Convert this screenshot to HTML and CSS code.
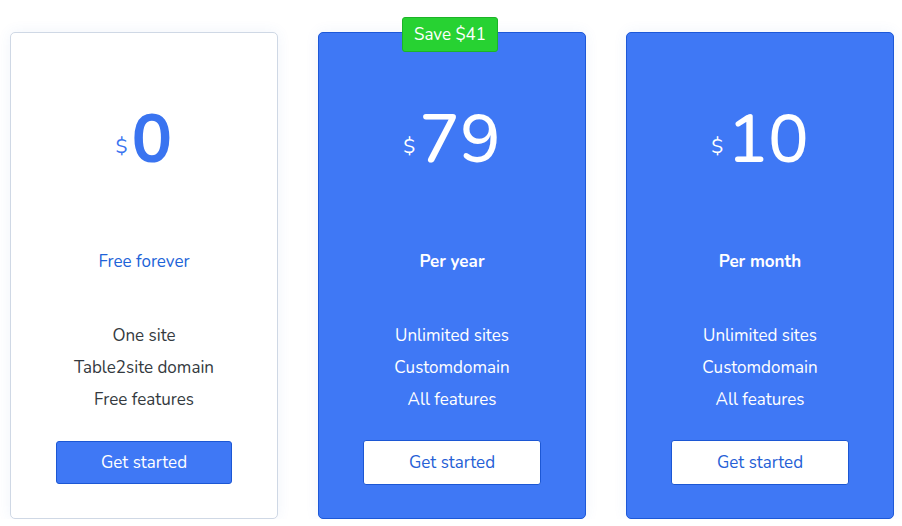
FILE: index.html
```html
<!DOCTYPE html>
<html>
<head>
<meta charset="utf-8">
<link rel="stylesheet" href="styles.css">
</head>
<body>
<div class="plans">
  <div class="card">
    <div class="price"><span class="cur">$</span><span class="amt amt-bold">0</span></div>
    <div class="label">Free forever</div>
    <ul class="feats">
      <li>One site</li>
      <li>Table2site domain</li>
      <li>Free features</li>
    </ul>
    <a class="btn">Get started</a>
  </div>
  <div class="card card-blue">
    <div class="badge">Save $41</div>
    <div class="price"><span class="cur">$</span><span class="amt">79</span></div>
    <div class="label">Per year</div>
    <ul class="feats">
      <li>Unlimited sites</li>
      <li>Customdomain</li>
      <li>All features</li>
    </ul>
    <a class="btn">Get started</a>
  </div>
  <div class="card card-blue">
    <div class="price"><span class="cur">$</span><span class="amt">10</span></div>
    <div class="label">Per month</div>
    <ul class="feats">
      <li>Unlimited sites</li>
      <li>Customdomain</li>
      <li>All features</li>
    </ul>
    <a class="btn">Get started</a>
  </div>
</div>
</body>
</html>
```
FILE: styles.css
```css
html, body {
  margin: 0;
  padding: 0;
  background: #ffffff;
}
body {
  font-family: "Nunito", Lato, "Open Sans", sans-serif;
  font-size: 17px;
  color: #343a40;
}
.plans {
  display: flex;
  gap: 40px;
  padding: 32px 0 0 10px;
}
.card {
  position: relative;
  box-sizing: border-box;
  width: 268px;
  height: 487px;
  border: 1px solid #cfd8e5;
  border-radius: 5px;
  background: #ffffff;
  box-shadow: 0 0 14px rgba(70, 110, 200, 0.08);
  display: flex;
  flex-direction: column;
  align-items: center;
  padding-top: 67px;
}
.card-blue {
  background: #3f78f5;
  border-color: #1d58d8;
  color: #ffffff;
}
.badge {
  position: absolute;
  top: -16px;
  left: 50%;
  transform: translateX(-50%);
  margin-left: -2px;
  box-sizing: border-box;
  width: 96px;
  height: 35px;
  line-height: 33px;
  text-align: center;
  background: #27d232;
  border: 1px solid #1cb427;
  border-radius: 3px;
  color: #ffffff;
  font-size: 17px;
}
.price {
  height: 80px;
  display: flex;
  align-items: center;
  justify-content: center;
  color: #3a74f0;
}
.card-blue .price { color: #ffffff; }
.cur {
  font-size: 20px;
  margin-right: 4px;
  margin-top: 12px;
}
.amt {
  font-size: 68px;
  line-height: 80px;
  font-weight: 500;
}
.amt-bold { font-weight: 700; }
.label {
  margin-top: 70px;
  line-height: 24px;
  color: #2063d8;
}
.card-blue .label {
  color: #ffffff;
  font-weight: 700;
}
.feats {
  list-style: none;
  margin: 46px 0 0;
  padding: 0;
  text-align: center;
}
.feats li {
  line-height: 32px;
}
.btn {
  margin-top: 25px;
  box-sizing: border-box;
  width: 176px;
  height: 43px;
  line-height: 41px;
  text-align: center;
  background: #3f78f5;
  border: 1px solid #1c57d4;
  border-radius: 3px;
  color: #ffffff;
  font-size: 17px;
}
.card-blue .btn {
  width: 178px;
  height: 45px;
  line-height: 43px;
  margin-top: 24px;
  background: #ffffff;
  color: #2560d6;
  border-color: #1c57d4;
}
```
